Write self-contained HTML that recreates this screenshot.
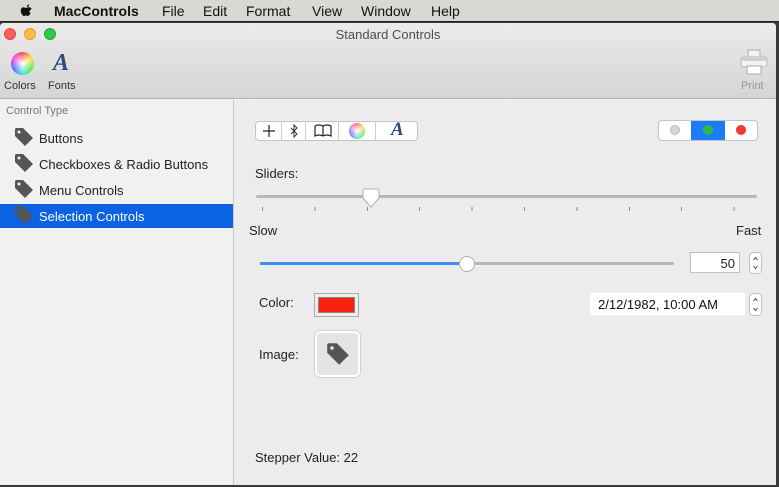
<!DOCTYPE html>
<html><head><style>
*{margin:0;padding:0;box-sizing:border-box}
body{width:779px;height:487px;overflow:hidden;background:#3a3a3a;font-family:"Liberation Sans",sans-serif;font-size:13px;color:#222;position:relative}
.a{position:absolute}
</style></head><body>
<div class="a" style="left:0;top:0;width:779px;height:22px;background:#d8d9d3;border-bottom:1px solid #222"></div>
<svg class="a" style="left:19px;top:3px" width="16" height="16" viewBox="0 0 16 16"><path d="M11 8.5c0-2 1.6-2.7 1.7-2.8-1-1.4-2.4-1.5-2.9-1.5-1.2-.1-2.300.7-2.900.7s-1.500-.7-2.500-.7C3.100 4.300 1.800 5.400 1.800 7.600c0 1.400.5 2.900 1.200 3.900.6.800 1.100 1.500 1.900 1.500s1.100-.5 2-.5 1.200.5 2 .5 1.300-.8 1.800-1.500c.6-.8.800-1.600.8-1.700-.1 0-1.500-.6-1.500-2.300zM9.600 3.300c.4-.5.700-1.200.6-1.900-.6 0-1.300.4-1.700.9-.4.400-.7 1.100-.6 1.800.6 0 1.300-.3 1.700-.8z" fill="#111"/></svg>
<div class="a" style="left:54px;top:3px;font-size:14px;font-weight:bold;color:#111">MacControls</div>
<div class="a" style="left:162px;top:3px;font-size:14px;color:#111">File</div>
<div class="a" style="left:203px;top:3px;font-size:14px;color:#111">Edit</div>
<div class="a" style="left:246px;top:3px;font-size:14px;color:#111">Format</div>
<div class="a" style="left:312px;top:3px;font-size:14px;color:#111">View</div>
<div class="a" style="left:361px;top:3px;font-size:14px;color:#111">Window</div>
<div class="a" style="left:431px;top:3px;font-size:14px;color:#111">Help</div>
<div class="a" style="left:0;top:23px;width:776px;height:462px;background:#ececec;overflow:hidden;border-radius:4px 4px 0 0">
 <div class="a" style="left:0;top:0;width:776px;height:76px;background:linear-gradient(#ebebeb,#d5d5d5);border-bottom:1px solid #b8b8b8"></div>
 <div class="a" style="left:4px;top:5px;width:12px;height:12px;border-radius:6px;background:#fc605c;border:1px solid #de4a45"></div>
 <div class="a" style="left:24px;top:5px;width:12px;height:12px;border-radius:6px;background:#fdbc40;border:1px solid #dea034"></div>
 <div class="a" style="left:44px;top:5px;width:12px;height:12px;border-radius:6px;background:#34c84a;border:1px solid #27aa35"></div>
 <div class="a" style="left:0;top:4px;width:776px;text-align:center;color:#4d4d4d;font-size:13px">Standard Controls</div>
 <div class="a" style="left:11px;top:29px;width:23px;height:23px;border-radius:50%;background:radial-gradient(circle at 50% 50%,#fff 0,rgba(255,255,255,0) 70%),conic-gradient(#f44,#fd4,#4e4,#4dd,#46f,#e4e,#f44)"></div>
 <div class="a" style="left:53px;top:27px;font-family:'Liberation Serif',serif;font-style:italic;font-weight:bold;font-size:24px;color:#2d4a7a">A</div>
 <div class="a" style="left:4px;top:57px;font-size:11px;color:#333">Colors</div>
 <div class="a" style="left:48px;top:57px;font-size:11px;color:#333">Fonts</div>
 <svg class="a" style="left:739px;top:24px" width="30" height="32" viewBox="0 0 30 32"><rect x="9" y="3" width="12" height="8" fill="#f2f2f2" stroke="#aaa"/><rect x="2" y="10" width="26" height="10" rx="3" fill="#f3f3f3" stroke="#b5b5b5"/><rect x="3" y="11" width="24" height="3" fill="#cfcfcf"/><rect x="8" y="19" width="14" height="8" fill="#fff" stroke="#aaa"/></svg>
 <div class="a" style="left:741px;top:57px;font-size:11px;color:#999">Print</div>
 <div class="a" style="left:0;top:77px;width:234px;height:385px;background:#f1f1f1;border-right:1px solid #c8c8c8"></div>
 <div class="a" style="left:6px;top:82px;font-size:11px;color:#777">Control Type</div>
 <div class="a" style="left:0;top:181px;width:233px;height:24px;background:#0b63e3"></div>
 <div class="a" style="left:39px;top:108px;color:#222">Buttons</div>
 <div class="a" style="left:39px;top:134px;color:#222">Checkboxes &amp; Radio Buttons</div>
 <div class="a" style="left:39px;top:160px;color:#222">Menu Controls</div>
 <div class="a" style="left:39px;top:186px;color:#fff">Selection Controls</div>
 <svg class="a" style="left:14px;top:104px" width="20" height="20" viewBox="0 0 20 20"><path d="M1 2v7l10 10 8-8L9 1H2z" fill="#555"/><circle cx="5" cy="5" r="1.5" fill="#f1f1f1"/></svg>
 <svg class="a" style="left:14px;top:130px" width="20" height="20" viewBox="0 0 20 20"><path d="M1 2v7l10 10 8-8L9 1H2z" fill="#555"/><circle cx="5" cy="5" r="1.5" fill="#f1f1f1"/></svg>
 <svg class="a" style="left:14px;top:156px" width="20" height="20" viewBox="0 0 20 20"><path d="M1 2v7l10 10 8-8L9 1H2z" fill="#555"/><circle cx="5" cy="5" r="1.5" fill="#f1f1f1"/></svg>
 <svg class="a" style="left:14px;top:182px" width="20" height="20" viewBox="0 0 20 20"><path d="M1 2v7l10 10 8-8L9 1H2z" fill="#555"/><circle cx="5" cy="5" r="1.5" fill="#0b63e3"/></svg>
 <div class="a" style="left:255px;top:98px;width:163px;height:20px;background:#fff;border:1px solid #c4c4c4;border-radius:4px"></div>
 <div class="a" style="left:281px;top:98px;width:1px;height:20px;background:#ccc"></div>
 <div class="a" style="left:305px;top:98px;width:1px;height:20px;background:#ccc"></div>
 <div class="a" style="left:338px;top:98px;width:1px;height:20px;background:#ccc"></div>
 <div class="a" style="left:375px;top:98px;width:1px;height:20px;background:#ccc"></div>
 <svg class="a" style="left:262px;top:101px" width="14" height="14" viewBox="0 0 14 14"><path d="M7 1v12M1 7h12" stroke="#222" stroke-width="1.2"/></svg>
 <svg class="a" style="left:289px;top:101px" width="10" height="14" viewBox="0 0 10 14"><path d="M2 4l6 6-3 3V1l3 3-6 6" fill="none" stroke="#333" stroke-width="1"/></svg>
 <svg class="a" style="left:314px;top:101px" width="18" height="14" viewBox="0 0 18 14"><path d="M1 2q4-2 8 0q4-2 8 0v10q-4-2-8 0q-4-2-8 0zM9 2v10" fill="none" stroke="#222" stroke-width="1.2"/></svg>
 <div class="a" style="left:349px;top:100px;width:16px;height:16px;border-radius:50%;background:radial-gradient(circle,#fff 0,rgba(255,255,255,0) 70%),conic-gradient(#f77,#fd6,#6e6,#6dd,#77f,#e7e,#f77)"></div>
 <div class="a" style="left:391px;top:96px;font-family:'Liberation Serif',serif;font-style:italic;font-weight:bold;font-size:19px;color:#2d4a7a">A</div>
 <div class="a" style="left:658px;top:97px;width:100px;height:21px;background:#fff;border:1px solid #c4c4c4;border-radius:4px;overflow:hidden"><div class="a" style="left:32px;top:0;width:34px;height:21px;background:#1a7cf7"></div></div>
 <div class="a" style="left:670px;top:102px;width:10px;height:10px;border-radius:5px;background:#d6d6d6;border:1px solid #bbb"></div>
 <div class="a" style="left:703px;top:102px;width:10px;height:10px;border-radius:5px;background:#2db84a"></div>
 <div class="a" style="left:736px;top:102px;width:10px;height:10px;border-radius:5px;background:#f03a3a"></div>
 <div class="a" style="left:255px;top:143px">Sliders:</div>
 <div class="a" style="left:256px;top:172px;width:501px;height:3px;background:#b8b8b8;border-radius:2px"></div>
 <svg class="a" style="left:361px;top:165px" width="20" height="22" viewBox="0 0 20 22"><path d="M2 3q0-2 2-2h12q2 0 2 2v7l-8 9-8-9z" fill="#fff" stroke="#b0b0b0"/></svg>
 <div class="a" style="left:262px;top:184px;width:496px;height:4px;background:repeating-linear-gradient(90deg,#888 0 1px,transparent 1px 52.4px)"></div>
 <div class="a" style="left:249px;top:200px">Slow</div>
 <div class="a" style="left:736px;top:200px">Fast</div>
 <div class="a" style="left:260px;top:239px;width:414px;height:3px;background:#b8b8b8;border-radius:2px"></div>
 <div class="a" style="left:260px;top:239px;width:206px;height:3px;background:#3a8ef5;border-radius:2px"></div>
 <div class="a" style="left:459px;top:233px;width:16px;height:16px;border-radius:8px;background:#fff;border:1px solid #b0b0b0"></div>
 <div class="a" style="left:690px;top:229px;width:50px;height:21px;background:#fff;border:1px solid #c0c0c0;text-align:right;padding:3px 4px 0 0">50</div>
 <svg class="a" style="left:749px;top:229px" width="13" height="22" viewBox="0 0 13 22"><rect x=".5" y=".5" width="12" height="21" rx="4" fill="#fff" stroke="#c0c0c0"/><path d="M4.5 8l2-2.500 2 2.500M4.500 14l2 2.500 2-2.500" fill="none" stroke="#444"/></svg>
 <div class="a" style="left:259px;top:272px">Color:</div>
 <div class="a" style="left:314px;top:270px;width:45px;height:24px;border:1px solid #aaa;background:#eee;padding:3px"><div style="width:100%;height:100%;background:#f8200e;border:1px solid #888"></div></div>
 <div class="a" style="left:590px;top:270px;width:155px;height:22px;background:#fff;padding:4px 0 0 8px;color:#111">2/12/1982, 10:00 AM</div>
 <svg class="a" style="left:749px;top:270px" width="13" height="23" viewBox="0 0 13 23"><rect x=".5" y=".5" width="12" height="22" rx="4" fill="#fff" stroke="#c0c0c0"/><path d="M4.5 8l2-2.500 2 2.500M4.500 15l2 2.500 2-2.500" fill="none" stroke="#444"/></svg>
 <div class="a" style="left:259px;top:324px">Image:</div>
 <div class="a" style="left:315px;top:308px;width:45px;height:46px;background:#e4e4e4;border:2px solid #fff;border-radius:5px;box-shadow:0 0 0 1px #d0d0d0"></div>
 <svg class="a" style="left:326px;top:319px" width="24" height="24" viewBox="0 0 20 20"><path d="M1 2v7l10 10 8-8L9 1H2z" fill="#555"/><circle cx="5" cy="5" r="1.5" fill="#e4e4e4"/></svg>
 <div class="a" style="left:255px;top:427px">Stepper Value: 22</div>
</div>
</body></html>
